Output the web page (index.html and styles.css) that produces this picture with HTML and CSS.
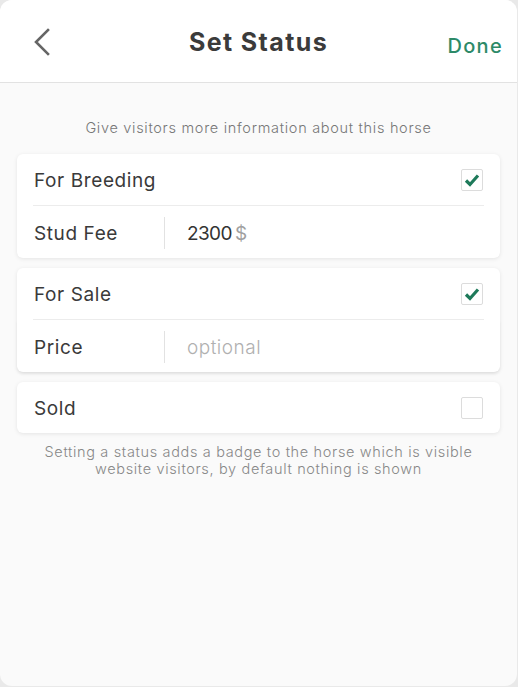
FILE: index.html
```html
<!DOCTYPE html>
<html>
<head>
<meta charset="utf-8">
<link rel="stylesheet" href="styles.css">
</head>
<body>
<div class="modal">
  <header class="header">
    <div class="back">
      <svg width="18" height="28" viewBox="0 0 18 28"><path d="M15 2 L3 14 L15 26" fill="none" stroke="#666" stroke-width="2.6" stroke-linecap="square"/></svg>
    </div>
    <h1 class="title">Set Status</h1>
    <div class="done">Done</div>
  </header>
  <main class="content">
    <p class="hint">Give visitors more information about this horse</p>
    <section class="card">
      <div class="row">
        <span class="label">For Breeding</span>
        <span class="check on"><svg width="16" height="14" viewBox="0 0 16 14"><path d="M2 7.5 L6 11.5 L14 2.5" fill="none" stroke="#1e7a5a" stroke-width="3.2"/></svg></span>
      </div>
      <div class="divider"></div>
      <div class="row field">
        <span class="flabel">Stud Fee</span>
        <span class="vsep"></span>
        <span class="value">2300<span class="cur">$</span></span>
      </div>
    </section>
    <section class="card">
      <div class="row">
        <span class="label">For Sale</span>
        <span class="check on"><svg width="16" height="14" viewBox="0 0 16 14"><path d="M2 7.5 L6 11.5 L14 2.5" fill="none" stroke="#1e7a5a" stroke-width="3.2"/></svg></span>
      </div>
      <div class="divider"></div>
      <div class="row field sub">
        <span class="flabel">Price</span>
        <span class="vsep"></span>
        <span class="value placeholder">optional</span>
      </div>
    </section>
    <section class="card">
      <div class="row">
        <span class="label">Sold</span>
        <span class="check"></span>
      </div>
    </section>
    <p class="note">Setting a status adds a badge to the horse which is visible<br>website visitors, by default nothing is shown</p>
  </main>
</div>
</body>
</html>
```

FILE: styles.css
```css
html, body {
  margin: 0;
  padding: 0;
  background: #e9e9e9;
}
body {
  font-family: Inter, "Noto Sans", sans-serif;
  width: 518px;
  height: 687px;
  overflow: hidden;
}
.modal {
  width: 517px;
  height: 686px;
  background: #fafafa;
  border-radius: 12px;
  overflow: hidden;
}
.header {
  height: 82px;
  background: #fff;
  border-bottom: 1px solid #e2e2e2;
  display: grid;
  grid-template-columns: 120px 1fr 120px;
  align-items: center;
}
.back {
  padding-left: 33px;
  padding-top: 1px;
  display: flex;
}
.title {
  margin: 0;
  text-align: center;
  font-size: 25px;
  font-weight: 700;
  color: #3b3b3b;
  letter-spacing: 1.4px;
  padding-top: 2px;
}
.done {
  text-align: right;
  padding-right: 14px;
  padding-top: 9px;
  font-size: 20px;
  font-weight: 500;
  color: #2d8a68;
  letter-spacing: 1.3px;
}
.content {
  padding: 35px 17px 0 17px;
}
.hint {
  margin: 0 0 16px 0;
  text-align: center;
  font-size: 14.5px;
  line-height: 20px;
  color: #777;
  font-weight: 300;
  letter-spacing: 0.7px;
}
.card {
  background: #fff;
  border-radius: 6px;
  box-shadow: 0 1px 4px rgba(0,0,0,0.09);
  margin-bottom: 10px;
}
.row {
  height: 51px;
  display: flex;
  align-items: center;
  padding: 0 17px;
}
.field {
  height: 52px;
}
.sub {
  box-shadow: 0 2px 3px rgba(0,0,0,0.05);
  border-radius: 0 0 6px 6px;
}
.label, .flabel {
  font-size: 19px;
  color: #3a3a3a;
  font-weight: 400;
  flex: 1;
  letter-spacing: 0.6px;
  padding-top: 2px;
}
.flabel {
  flex: 0 0 130px;
}
.divider {
  height: 1px;
  background: #ececec;
  margin: 0 16px;
}
.vsep {
  width: 1px;
  height: 32px;
  background: #e2e2e2;
  margin-top: 2px;
}
.value {
  padding-left: 22px;
  padding-top: 2px;
  font-size: 19px;
  color: #333;
  letter-spacing: -0.6px;
}
.cur {
  color: #a0a0a0;
  margin-left: 3px;
}
.placeholder {
  color: #b0b0b0;
  font-weight: 300;
  letter-spacing: 0.5px;
}
.check {
  width: 20px;
  height: 20px;
  border: 1px solid #dcdcdc;
  border-radius: 2px;
  display: flex;
  align-items: center;
  justify-content: center;
}
.note {
  margin: 9px 0 0 0;
  text-align: center;
  font-size: 14.5px;
  line-height: 17px;
  color: #888;
  font-weight: 300;
  letter-spacing: 0.65px;
}
```
